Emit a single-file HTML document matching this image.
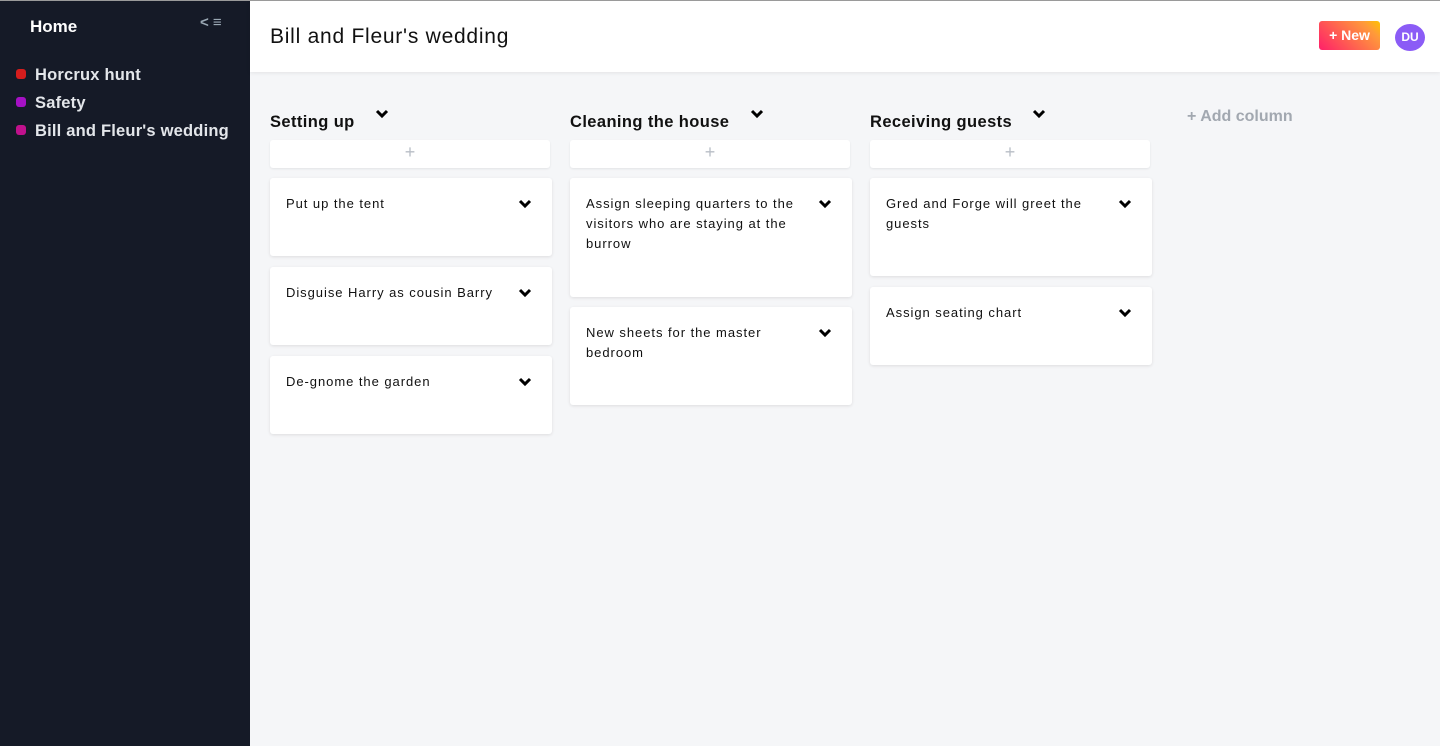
<!DOCTYPE html>
<html><head><style>
*{box-sizing:border-box;margin:0;padding:0}
body{width:1440px;height:746px;overflow:hidden;font-family:"Liberation Sans",sans-serif;background:#f5f6f8;position:relative}
.top{position:absolute;left:0;top:0;width:1440px;height:1px;background:#9a9a9a;z-index:5}
.side{position:absolute;left:0;top:0;width:250px;height:746px;background:#151a27}
.home{position:absolute;left:30px;top:17px;color:#fff;font-size:17px;font-weight:bold}
.tog{position:absolute;left:200px;top:14px;color:#9aa8b4;font-size:15px;font-weight:bold}
.item{position:absolute;left:16px;color:#e3e6ea;font-size:16.5px;font-weight:bold;letter-spacing:.2px}
.item i{display:inline-block;width:10px;height:10px;border-radius:3px;margin-right:9px;vertical-align:1px}
.hdr{position:absolute;left:250px;top:0;width:1190px;height:72px;background:#fff;box-shadow:0 1px 4px rgba(0,0,0,.08)}
.title{position:absolute;left:20px;top:25px;font-size:21px;color:#111;letter-spacing:.75px}
.new{position:absolute;left:1069px;top:21px;width:61px;height:29px;border-radius:3px;background:linear-gradient(45deg,#ff1f6a,#ff9a3a 80%,#ffc300);color:#fff;font-weight:bold;font-size:14px;text-align:center;line-height:29px}
.du{position:absolute;left:1145px;top:24px;width:30px;height:27px;border-radius:50%;background:#8b5cf6;color:#fff;font-weight:bold;font-size:12px;text-align:center;line-height:27px}
.col{position:absolute;top:110px;width:282px}
.ch{font-size:16.5px;font-weight:bold;color:#111;letter-spacing:.4px;height:30px;position:relative;top:3px}
.ch svg{position:absolute;top:-4px}
.add{width:280px;height:28px;background:#fff;border-radius:3px;box-shadow:0 1px 2px rgba(0,0,0,.08);text-align:center;color:#b8bec6;font-size:18px;line-height:24px}
.card{position:absolute;left:0;width:282px;background:#fff;border-radius:3px;box-shadow:0 1px 3px rgba(0,0,0,.1);padding:16px 50px 0 16px;font-size:13px;line-height:20px;letter-spacing:.95px;color:#111}
.card svg{position:absolute;right:20px;top:21px}
.addcol{position:absolute;left:1187px;top:108px;color:#a2a8b0;font-size:16px;font-weight:bold}
</style></head><body>
<div class="top"></div>
<div class="side">
<div class="home">Home</div>
<div class="tog">&lt; &#8801;</div>
<div class="item" style="top:66px"><i style="background:#d51d1d"></i>Horcrux hunt</div>
<div class="item" style="top:94px"><i style="background:#a511c4"></i>Safety</div>
<div class="item" style="top:122px"><i style="background:#c0118c"></i>Bill and Fleur's wedding</div>
</div>
<div class="hdr"><div class="title">Bill and Fleur's wedding</div><div class="new">+ New</div><div class="du">DU</div></div>

<svg width="0" height="0" style="position:absolute"><defs><symbol id="chev" viewBox="0 0 14 10"><path d="M2 2l5 5 5-5" fill="none" stroke="#000" stroke-width="3"/></symbol></defs></svg>

<div class="col" style="left:270px">
<div class="ch">Setting up<svg width="14" height="10" style="left:105px"><use href="#chev"/></svg></div>
<div class="add">+</div>
<div class="card" style="top:68px;height:78px">Put up the tent<svg width="14" height="10"><use href="#chev"/></svg></div>
<div class="card" style="top:157px;height:78px">Disguise Harry as cousin Barry<svg width="14" height="10"><use href="#chev"/></svg></div>
<div class="card" style="top:246px;height:78px">De-gnome the garden<svg width="14" height="10"><use href="#chev"/></svg></div>
</div>
<div class="col" style="left:570px">
<div class="ch">Cleaning the house<svg width="14" height="10" style="left:180px"><use href="#chev"/></svg></div>
<div class="add">+</div>
<div class="card" style="top:68px;height:119px">Assign sleeping quarters to the visitors who are staying at the burrow<svg width="14" height="10"><use href="#chev"/></svg></div>
<div class="card" style="top:197px;height:98px">New sheets for the master bedroom<svg width="14" height="10"><use href="#chev"/></svg></div>
</div>
<div class="col" style="left:870px">
<div class="ch">Receiving guests<svg width="14" height="10" style="left:162px"><use href="#chev"/></svg></div>
<div class="add">+</div>
<div class="card" style="top:68px;height:98px">Gred and Forge will greet the guests<svg width="14" height="10"><use href="#chev"/></svg></div>
<div class="card" style="top:177px;height:78px">Assign seating chart<svg width="14" height="10"><use href="#chev"/></svg></div>
</div>
<div class="addcol">+ Add column</div>
</body></html>
